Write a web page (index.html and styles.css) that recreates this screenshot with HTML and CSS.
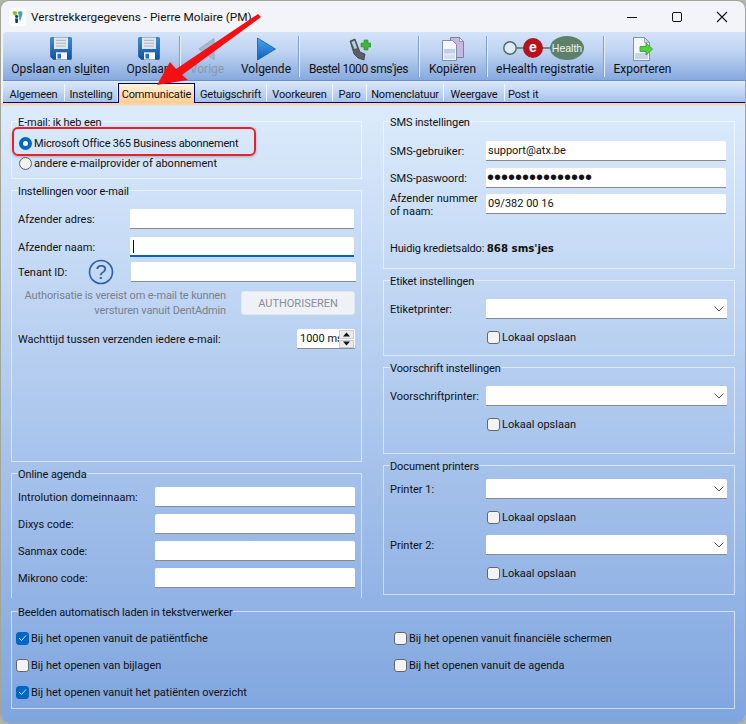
FILE: index.html
```html
<!DOCTYPE html>
<html lang="nl">
<head>
<meta charset="utf-8">
<title>Verstrekkergegevens</title>
<link rel="stylesheet" href="styles.css">
</head>
<body>
<svg class="defs" width="0" height="0" aria-hidden="true">
  <defs>
    <linearGradient id="fl" x1="0" y1="0" x2="0" y2="1"><stop offset="0" stop-color="#3f8fd8"/><stop offset="1" stop-color="#0f4f9e"/></linearGradient>
    <symbol id="floppy" viewBox="0 0 22 24" preserveAspectRatio="none">
      <path d="M1.5 0.5H20.5A1 1 0 0 1 21.5 1.5V22.5A1 1 0 0 1 20.5 23.500H3.500L0.500 20.500V1.500A1 1 0 0 1 1.500 0.500Z" fill="url(#fl)" stroke="#14508f" stroke-width=".6"/>
      <rect x="4" y="0.500" width="14" height="12" fill="#e3e6ea"/>
      <path d="M6 3.500H16M6 6.500H16M6 9.500H16" stroke="#a9b1bb" stroke-width="1"/>
      <rect x="6" y="16" width="11" height="7.500" fill="#f3f6fa"/>
      <rect x="7.500" y="17.500" width="3.500" height="5" fill="#2d6fb5"/>
    </symbol>
  </defs>
</svg>
<div class="window">
  <header class="titlebar">
    <svg class="app-icon" width="17" height="18" viewBox="0 0 17 18">
      <rect width="17" height="18" rx="3" fill="#fff"/>
      <path d="M3.500 4C3.500 2.800 7 3 8 3.800L7.500 8.500C5.500 7.500 3.500 6.500 3.500 4Z" fill="#8dbb2a"/>
      <path d="M9 3.800C10 3 13.500 2.800 13.500 4C13.500 8 11.800 10 11 14L9.800 9Z" fill="#35a8b5"/>
      <circle cx="7.600" cy="8.500" r="1.500" fill="#123a6a"/>
      <path d="M6 10.500H9.200L8.800 15H6.500Z" fill="#123a6a"/>
    </svg>
    <span class="title-text">Verstrekkergegevens - Pierre Molaire (PM)</span>
    <div class="win-controls">
      <svg width="12" height="12" viewBox="0 0 12 12"><path d="M1 6.500H11" stroke="#111" stroke-width="1"/></svg>
      <svg width="12" height="12" viewBox="0 0 12 12"><rect x="1.500" y="1.500" width="9" height="9" rx="1.500" fill="none" stroke="#111"/></svg>
      <svg width="12" height="12" viewBox="0 0 12 12"><path d="M1 1L11 11M11 1L1 11" stroke="#111" stroke-width="1.100"/></svg>
    </div>
  </header>

  <nav class="toolbar">
    <div class="tool tool-save-close">
      <svg class="tool-icon" width="22" height="23"><use href="#floppy"/></svg>
      <span>Opslaan en sl<u>u</u>iten</span>
    </div>
    <div class="tool tool-save">
      <svg class="tool-icon" width="22" height="23"><use href="#floppy"/></svg>
      <span>Opslaan</span>
    </div>
    <i class="sep"></i>
    <div class="tool tool-prev is-disabled">
      <svg class="tool-icon" width="24" height="24" viewBox="0 0 24 24"><path d="M19 1.500V22.500L4 12Z" fill="#a8b7cb" stroke="#98a8be" stroke-linejoin="round"/></svg>
      <span>Vorige</span>
    </div>
    <div class="tool tool-next">
      <svg class="tool-icon" width="24" height="24" viewBox="0 0 24 24">
        <defs><linearGradient id="pl" x1="0" y1="0" x2="0" y2="1"><stop offset="0" stop-color="#4aa3ee"/><stop offset="1" stop-color="#0d62bd"/></linearGradient></defs>
        <path d="M3.500 1V23L21.500 12Z" fill="url(#pl)" stroke="#1a5aa5" stroke-width=".8" stroke-linejoin="round"/>
      </svg>
      <span>Volgende</span>
    </div>
    <i class="sep"></i>
    <div class="tool tool-sms">
      <svg class="tool-icon" width="24" height="24" viewBox="0 0 24 24">
        <path d="M3 4L8 2L13 15L18 17L17 23L11 21L7 17Z" fill="#5a5f63" stroke="#33363a" stroke-width=".7"/>
        <path d="M4.500 5L7.500 3.800L10 11L7.500 12Z" fill="#b9cfe0"/>
        <path d="M14 6H17V3H21V6H24V10H21V13H17V10H14Z" fill="#3db53a" stroke="#278a27" stroke-width=".6"/>
      </svg>
      <span class="tight">Bestel 1000 sms'jes</span>
    </div>
    <i class="sep"></i>
    <div class="tool tool-copy">
      <svg class="tool-icon" width="24" height="24" viewBox="0 0 24 24">
        <path d="M9.500 0.500H18.500L22.500 4.500V20.500H9.500Z" fill="#c6b8e2" stroke="#6f6a9a" stroke-width=".8"/>
        <path d="M18.500 0.500V4.500H22.500Z" fill="#f1eef8" stroke="#6f6a9a" stroke-width=".6"/>
        <path d="M1.500 3.500H11.500L15.500 7.500V23.500H1.500Z" fill="#f4f7fb" stroke="#6a7a92" stroke-width=".8"/>
        <rect x="3" y="12" width="11" height="4.500" fill="#bcd0ea"/>
        <rect x="3" y="17.500" width="11" height="4.500" fill="#d3dff0"/>
      </svg>
      <span>Kopiëren</span>
    </div>
    <i class="sep"></i>
    <div class="tool tool-ehealth">
      <svg class="tool-icon" width="84" height="26" viewBox="0 0 84 26">
        <path d="M13 13H25M38 13H50" stroke="#4f7561" stroke-width="1.500"/>
        <circle cx="7" cy="13" r="6.200" fill="#dfe9f7" stroke="#4f7561" stroke-width="1.500"/>
        <circle cx="30" cy="13" r="10" fill="#b5121b"/>
        <text class="eh-e" x="30" y="17" text-anchor="middle">e</text>
        <ellipse cx="64" cy="13" rx="17" ry="12" fill="#5d806a"/>
        <text class="eh-h" x="64" y="16.500" text-anchor="middle">Health</text>
      </svg>
      <span>eHealth registratie</span>
    </div>
    <i class="sep"></i>
    <div class="tool tool-export">
      <svg class="tool-icon" width="24" height="24" viewBox="0 0 24 24">
        <path d="M2.500 0.500H13.500L18.500 5.500V23.500H2.500Z" fill="#f4f7fb" stroke="#6a7a92" stroke-width=".8"/>
        <path d="M13.500 0.500V5.500H18.500Z" fill="#cfdcee" stroke="#6a7a92" stroke-width=".6"/>
        <rect x="4" y="16" width="13" height="6" fill="#c3d4ec"/>
        <path d="M9 9.500H15V6L21.500 12L15 18V14.500H9Z" fill="#52d13c" stroke="#2c9a2a" stroke-width=".8"/>
      </svg>
      <span>Exporteren</span>
    </div>
  </nav>

  <div class="tabs">
    <span class="tab t-alg">Algemeen</span>
    <span class="tab t-ins">Instelling</span>
    <span class="tab t-com is-active">Communicatie</span>
    <span class="tab t-get">Getuigschrift</span>
    <span class="tab t-voo">Voorkeuren</span>
    <span class="tab t-par">Paro</span>
    <span class="tab t-nom">Nomenclatuur</span>
    <span class="tab t-wee">Weergave</span>
    <span class="tab t-pos">Post it</span>
  </div>
  <div class="tab-line"></div>

  <main class="content">
    <div class="col">
      <fieldset class="group g-mail">
        <legend>E-mail: ik heb een</legend>
        <label class="radio-row r-first"><span class="radio is-on"></span><span class="ms-text">Microsoft Office 365 Business abonnement</span></label>
        <label class="radio-row r-next"><span class="radio"></span>andere e-mailprovider of abonnement</label>
      </fieldset>

      <fieldset class="group g-settings">
        <legend>Instellingen voor e-mail</legend>
        <div class="row s-1"><span class="lbl w-112">Afzender adres:</span><input class="field w-224"></div>
        <div class="row s-2"><span class="lbl w-112">Afzender naam:</span><div class="field w-224 is-focus"><i class="caret"></i></div></div>
        <div class="row s-3">
          <span class="lbl w-70">Tenant ID:</span>
          <svg class="help" width="26" height="26" viewBox="0 0 26 26"><circle cx="13" cy="13" r="11.500" fill="none" stroke="#2f5f9e" stroke-width="1.600"/><text class="help-q" x="13" y="20" text-anchor="middle">?</text></svg>
          <input class="field w-225 tenant">
        </div>
        <div class="row s-4">
          <p class="auth-note">Authorisatie is vereist om e-mail te kunnen<br>versturen vanuit DentAdmin</p>
          <button class="auth-btn" disabled>AUTHORISEREN</button>
        </div>
        <div class="row s-5">
          <span class="lbl w-279">Wachttijd tussen verzenden iedere e-mail:</span>
          <div class="spin">
            <span class="spin-val">1000 ms</span>
            <span class="spin-btns">
              <i><svg width="9" height="5" viewBox="0 0 9 5"><path d="M4.500 0.500L8 4.500H1Z" fill="#111"/></svg></i>
              <i><svg width="9" height="5" viewBox="0 0 9 5"><path d="M4.500 4.500L8 0.500H1Z" fill="#111"/></svg></i>
            </span>
          </div>
        </div>
      </fieldset>

      <fieldset class="group g-agenda">
        <legend>Online agenda</legend>
        <div class="row a-first"><span class="lbl w-137">Introlution domeinnaam:</span><input class="field w-200"></div>
        <div class="row a-next"><span class="lbl w-137">Dixys code:</span><input class="field w-200"></div>
        <div class="row a-next"><span class="lbl w-137">Sanmax code:</span><input class="field w-200"></div>
        <div class="row a-next"><span class="lbl w-137">Mikrono code:</span><input class="field w-200"></div>
      </fieldset>
    </div>

    <div class="col">
      <fieldset class="group g-sms">
        <legend>SMS instellingen</legend>
        <div class="row m-1"><span class="lbl w-95">SMS-gebruiker:</span><input class="field w-240" value="support@atx.be"></div>
        <div class="row m-2"><span class="lbl w-95">SMS-paswoord:</span><input class="field w-240 secret" type="password" value="123456789012345"></div>
        <div class="row m-3"><span class="lbl w-95 two-line">Afzender nummer<br>of naam:</span><input class="field w-240" value="09/382 00 16"></div>
        <div class="row m-4"><span class="credit">Huidig kredietsaldo: <b>868 sms'jes</b></span></div>
      </fieldset>

      <fieldset class="group g-label">
        <legend>Etiket instellingen</legend>
        <div class="row sel-first"><span class="lbl w-95">Etiketprinter:</span><div class="select"><svg width="10" height="6" viewBox="0 0 10 6"><path d="M0.500 0.500L5 5L9.500 0.500" fill="none" stroke="#555"/></svg></div></div>
        <label class="check-row under"><span class="check"></span>Lokaal opslaan</label>
      </fieldset>

      <fieldset class="group g-rx">
        <legend>Voorschrift instellingen</legend>
        <div class="row sel-first"><span class="lbl w-95">Voorschriftprinter:</span><div class="select"><svg width="10" height="6" viewBox="0 0 10 6"><path d="M0.500 0.500L5 5L9.500 0.500" fill="none" stroke="#555"/></svg></div></div>
        <label class="check-row under"><span class="check"></span>Lokaal opslaan</label>
      </fieldset>

      <fieldset class="group g-docs">
        <legend>Document printers</legend>
        <div class="row d-first"><span class="lbl w-95">Printer 1:</span><div class="select"><svg width="10" height="6" viewBox="0 0 10 6"><path d="M0.500 0.500L5 5L9.500 0.500" fill="none" stroke="#555"/></svg></div></div>
        <label class="check-row under"><span class="check"></span>Lokaal opslaan</label>
        <div class="row d-next"><span class="lbl w-95">Printer 2:</span><div class="select"><svg width="10" height="6" viewBox="0 0 10 6"><path d="M0.500 0.500L5 5L9.500 0.500" fill="none" stroke="#555"/></svg></div></div>
        <label class="check-row under"><span class="check"></span>Lokaal opslaan</label>
      </fieldset>
    </div>

    <fieldset class="group g-images">
      <legend>Beelden automatisch laden in tekstverwerker</legend>
      <div class="image-grid">
        <label class="check-row"><span class="check is-on"><svg width="9" height="8" viewBox="0 0 9 8"><path d="M1 4L3.500 6.500L8 1.500" fill="none" stroke="#cfe4f7" stroke-width="1"/></svg></span>Bij het openen vanuit de patiëntfiche</label>
        <label class="check-row"><span class="check"></span>Bij het openen vanuit financiële schermen</label>
        <label class="check-row"><span class="check"></span>Bij het openen van bijlagen</label>
        <label class="check-row"><span class="check"></span>Bij het openen vanuit de agenda</label>
        <label class="check-row"><span class="check is-on"><svg width="9" height="8" viewBox="0 0 9 8"><path d="M1 4L3.500 6.500L8 1.500" fill="none" stroke="#cfe4f7" stroke-width="1"/></svg></span>Bij het openen vanuit het patiënten overzicht</label>
      </div>
    </fieldset>
  </main>

  <div class="callout-box"></div>
  <svg class="callout-arrow" width="746" height="120" viewBox="0 0 746 120">
    <path d="M157 85L170 62L176 69L258 14L261 17L182 75L188 80Z" fill="#f40f12"/>
  </svg>
</div>
</body>
</html>
```

FILE: styles.css
```css
* { box-sizing: border-box; }
html, body { margin: 0; padding: 0; height: 100%; }
body {
  background: #b3b7a8;
  font-family: "Roboto", "Noto Sans", sans-serif;
  font-size: 11px;
  color: #111;
  overflow: hidden;
}
.defs { position: absolute; }
.window {
  position: relative;
  width: 744px;
  height: 722px;
  margin: 1px 0 0 1px;
  border-radius: 8px;
  background: #f3f4f9;
  overflow: hidden;
  box-shadow: 0 0 2px rgba(60, 60, 60, .5);
}

/* title bar */
.titlebar {
  height: 31px;
  display: flex;
  align-items: center;
  padding-left: 8px;
}
.app-icon { margin-right: 5px; }
.title-text { font-size: 11.800px; }
.win-controls {
  margin-left: auto;
  display: flex;
  gap: 33px;
  padding-right: 17px;
}

/* toolbar */
.toolbar {
  height: 49px;
  margin-left: 2px;
  display: grid;
  grid-template-columns: 115px 61px 1px 54px 64px 1px 119px 1px 67px 1px 116px 1px 77px;
  background: linear-gradient(#d3e3f9, #c0d4f2 40%, #86a9de);
  border-top-left-radius: 3px;
  border-bottom: 1px solid #6a90cb;
}
.tool {
  height: 48px;
  display: flex;
  flex-direction: column;
  align-items: center;
  padding: 5px 0 3px;
  white-space: nowrap;
}
.tool-icon { display: block; flex: none; }
.tool-ehealth .tool-icon { margin-top: -2px; }
.tool span { margin-top: auto; font-size: 12px; line-height: 16px; }
.tool .tight { letter-spacing: -.4px; }
.is-disabled span { color: #8b99ad; }
.sep {
  width: 1px;
  margin: 4px 0 3px;
  background: #7f9fce;
  box-shadow: 1px 0 0 #e8f0fc;
}
.eh-e { font: 700 14px "Liberation Sans", sans-serif; fill: #fff; }
.eh-h { font: 400 10.500px "Liberation Sans", sans-serif; fill: #f2f5f2; }

/* tabs */
.tabs {
  height: 22px;
  margin-left: 2px;
  display: grid;
  grid-template-columns: 62px 53px 77px 72px 66px 34px 77px 61px 1fr;
  background: linear-gradient(#dde9fa, #a7c2ec);
  border-bottom: 1px solid #00007a;
  align-items: end;
  letter-spacing: -.15px;
}
.tab {
  height: 17px;
  margin-bottom: 1px;
  line-height: 21px;
  text-align: center;
  border-right: 1px solid #f2f6fd;
  white-space: nowrap;
}
.t-com, .t-pos { border-right: 0; }
.t-pos { text-align: left; padding-left: 3px; }
.tab.is-active {
  height: 20px;
  margin-bottom: -1px;
  line-height: 22px;
  background: linear-gradient(#fff3de, #ffcd8e);
  border: 1px solid #00007a;
  border-bottom: 0;
}
.tab-line { height: 3px; background: linear-gradient(#fdcf9f, #e9dfd8); }

/* content */
.content {
  height: 617px;
  padding: 7px 0 0 10px;
  display: grid;
  grid-template-columns: 351px 352px;
  column-gap: 21px;
  row-gap: 5px;
  align-content: start;
  background: linear-gradient(#dcebfc, #7fa5df);
}
.col { display: flex; flex-direction: column; gap: 3px; }
.group {
  margin: 0;
  padding: 0 0 0 6px;
  min-width: 0;
  border: 1px solid rgba(255, 255, 255, .55);
}
.group legend {
  padding: 0;
  height: 16px;
  line-height: 20px;
  letter-spacing: -.1px;
  white-space: nowrap;
}
.g-mail { height: 66px; }
.g-settings { height: 280px; }
.g-agenda { height: 133px; border-bottom: 0; }
.g-sms { height: 156px; }
.g-label { height: 84px; }
.g-rx { height: 95px; }
.g-docs { height: 138px; }
.g-images { grid-column: 1 / 3; height: 106px; border-color: rgba(255, 255, 255, .6); }

/* generic rows and fields */
.row { display: flex; align-items: center; height: 20px; }
.lbl { flex: none; white-space: nowrap; }
.w-70 { width: 70px; }
.w-95 { width: 96px; }
.w-112 { width: 112px; }
.w-137 { width: 137px; }
.w-279 { width: 279px; }
.field {
  display: block;
  height: 20px;
  border: 0;
  border-bottom: 1px solid #8a8a8a;
  border-radius: 2px 2px 0 0;
  background: #fff;
  padding: 0 2px 1px;
  font: inherit;
  color: #111;
  outline: 0;
}
.w-200 { width: 200px; }
.w-224 { width: 224px; }
.w-225 { width: 225px; }
.w-240 { width: 240px; }
.is-focus { border-bottom: 2px solid #0067c0; position: relative; }
.caret { position: absolute; left: 3px; top: 3px; width: 1px; height: 13px; background: #111; }
.secret {
  -webkit-text-security: disc;
  font: 20px/19px "Liberation Sans", sans-serif;
  padding: 0 1px;
}
.help { margin-right: 17px; flex: none; }
.help-q { font: 400 20px "Liberation Sans", sans-serif; fill: #2f5f9e; }

/* radio */
.radio-row { display: flex; align-items: center; height: 18px; gap: 2px; padding-left: 1px; }
.r-first { margin-top: 5px; }
.r-next { margin-top: 2px; }
.ms-text { letter-spacing: -.2px; }
.radio {
  width: 13px;
  height: 13px;
  border-radius: 50%;
  background: #f1f1f1;
  border: 1px solid #5c5c5c;
}
.radio.is-on { background: #fff; border: 4px solid #0067c0; }

/* settings */
.s-1 { margin-top: 11px; }
.s-2 { margin-top: 8px; }
.s-3 { margin-top: 5px; }
.s-4 { margin-top: 9px; height: 24px; }
.s-5 { margin-top: 14px; }
.auth-note {
  width: 208px;
  margin: 0;
  text-align: right;
  line-height: 15px;
  letter-spacing: -.14px;
  color: #79818f;
  white-space: nowrap;
}
.auth-btn {
  width: 114px;
  height: 24px;
  margin-left: 15px;
  border: 1px solid #e3e7ee;
  border-radius: 3px;
  background: #eef1f6;
  color: #868e9b;
  font: inherit;
  padding: 0;
}
.spin {
  width: 58px;
  height: 20px;
  display: flex;
  background: #fff;
  border-bottom: 1px solid #8a8a8a;
  border-radius: 2px 2px 0 0;
  overflow: hidden;
}
.spin-val { width: 42px; padding-left: 3px; line-height: 19px; white-space: nowrap; overflow: hidden; }
.spin-btns { width: 15px; display: flex; flex-direction: column; gap: 1px; padding-top: 1px; }
.spin-btns i {
  height: 8.500px;
  display: flex;
  align-items: center;
  justify-content: center;
  background: #e9ebee;
  border: 1px solid #c9ccd2;
}

/* agenda */
.a-first { margin-top: 6px; }
.a-next { margin-top: 7px; }

/* sms */
.m-1 { margin-top: 12px; }
.m-2 { margin-top: 7px; }
.m-3 { margin-top: 6px; }
.m-4 { margin-top: 26px; height: 16px; }
.two-line { line-height: 13px; padding-top: 2px; }
.credit { letter-spacing: -.15px; }
.credit b { font-family: "DejaVu Sans", sans-serif; font-size: 10.200px; letter-spacing: 0; }

/* select */
.select {
  width: 241px;
  height: 20px;
  display: flex;
  align-items: center;
  justify-content: flex-end;
  padding-right: 3px;
  background: #fff;
  border-bottom: 1px solid #8a8a8a;
  border-radius: 2px 2px 0 0;
}
.sel-first { margin-top: 11px; }
.d-first { margin-top: 6px; }
.d-next { margin-top: 10px; }

/* checkbox */
.check-row { display: flex; align-items: center; height: 16px; gap: 2px; white-space: nowrap; }
.under { margin: 10px 0 0 97px; }
.check {
  flex: none;
  width: 13px;
  height: 13px;
  display: flex;
  align-items: center;
  justify-content: center;
  border: 1px solid #666;
  border-radius: 3px;
  background: #f3f3f3;
}
.check.is-on { background: #0067c0; border-color: #0067c0; }

/* images group */
.image-grid {
  margin: 11px 0 0 -2px;
  display: grid;
  grid-template-columns: 378px 1fr;
  row-gap: 11px;
}

/* annotation overlays */
.callout-box {
  position: absolute;
  left: 11px;
  top: 126px;
  width: 244px;
  height: 29px;
  border: 2px solid #e8202a;
  border-radius: 6px;
  box-shadow: 0 1px 3px rgba(120, 120, 140, .5);
}
.callout-arrow { position: absolute; left: -1px; top: -1px; pointer-events: none; }
```
